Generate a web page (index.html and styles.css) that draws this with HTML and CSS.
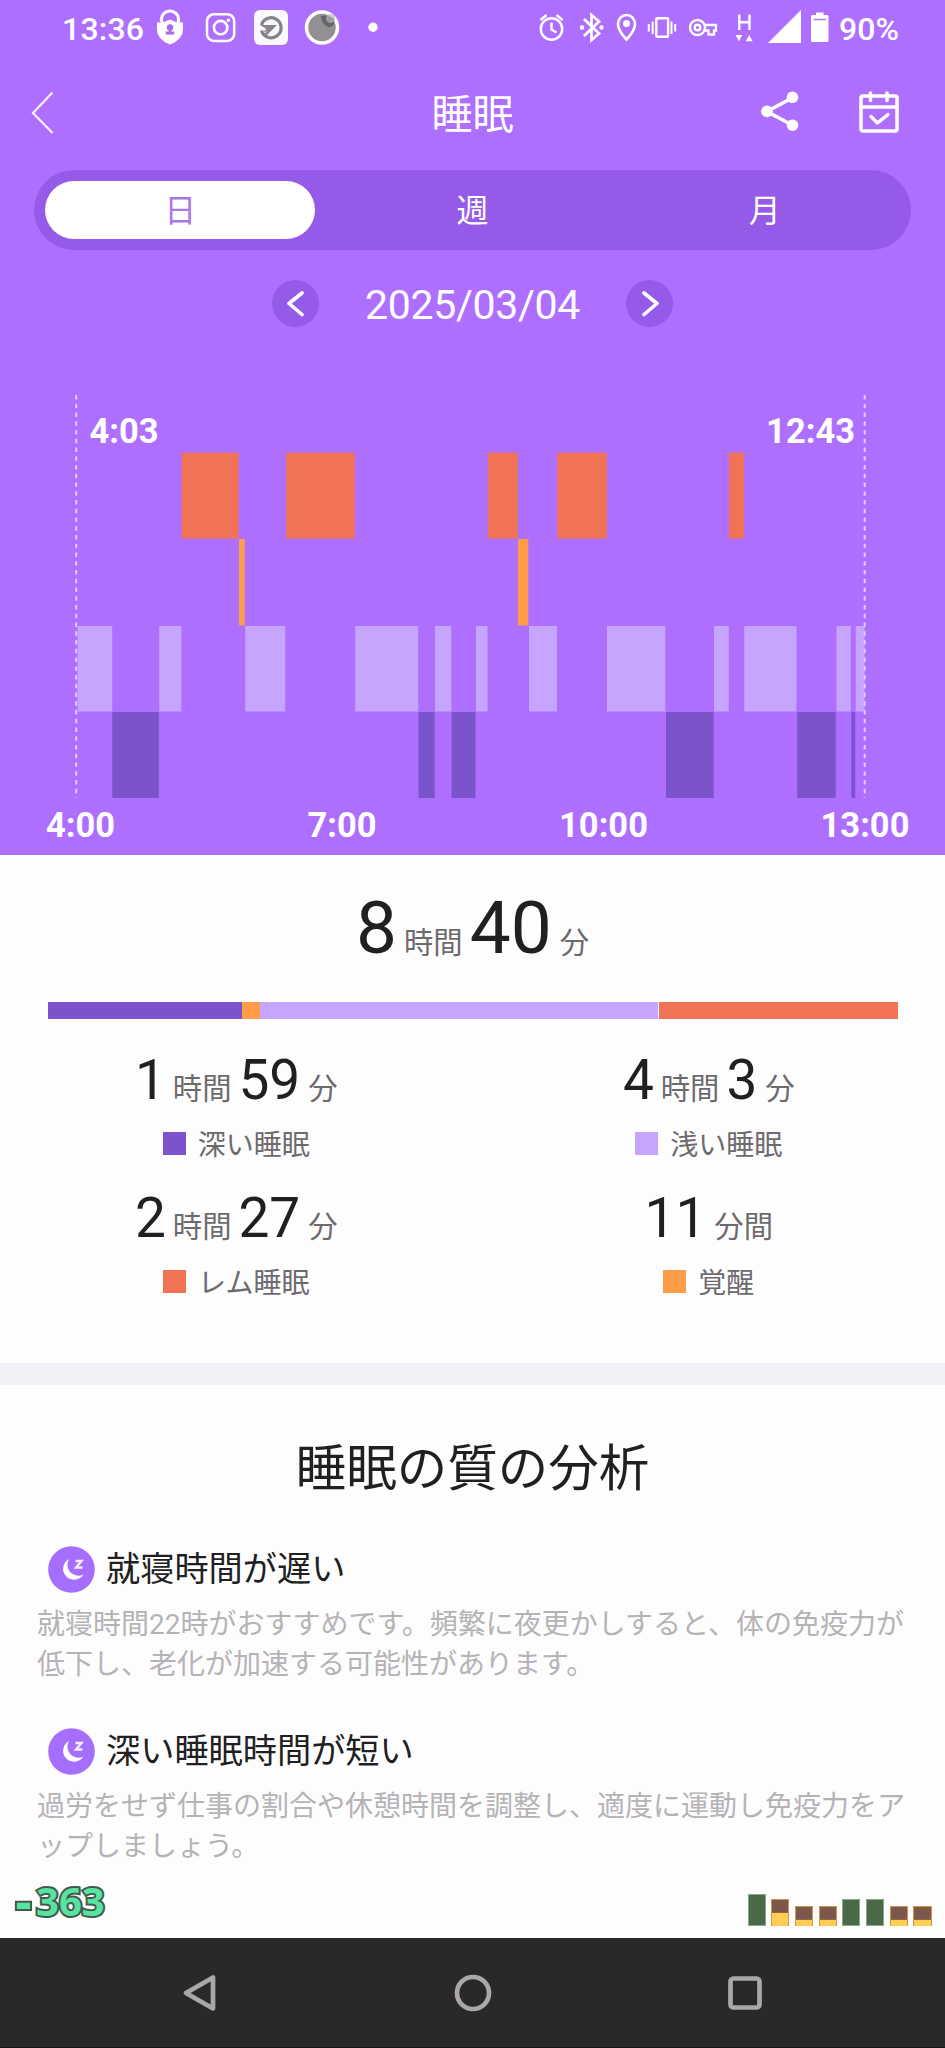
FILE: index.html
```
<!DOCTYPE html>
<html lang="ja">
<head>
<meta charset="utf-8">
<title>睡眠</title>
<link rel="stylesheet" href="styles.css">
</head>
<body>
<div class="screen">
  <section class="hero">
    <div class="status">
      <span class="status-text clock">13:36</span>
      <svg class="notifications" viewBox="150 0 240 56" width="240" height="56">
        <path d="M161.500 23v-3a8.500 8 0 0 1 17 0v3" transform="translate(0 -1)" fill="none" stroke="#fff" stroke-width="3.200"/>
        <path d="M157 22.500q7 .5 13-3q6 3.500 13 3v7q0 10-13 15q-13-5-13-15z" fill="#fff"/>
        <circle cx="170" cy="27.500" r="3.200" fill="#a76ae8"/><path d="M168.800 29h2.400v2.500h3v3h-8.400v-3h3z" fill="#a76ae8"/>
        <rect x="207" y="14.200" width="27.200" height="26.800" rx="7" fill="none" stroke="#fff" stroke-width="2.500"/>
        <circle cx="220.600" cy="27.600" r="6.700" fill="none" stroke="#fff" stroke-width="2.700"/><circle cx="228.400" cy="20.200" r="1.700" fill="#fff"/>
        <rect x="254" y="10" width="34" height="35" rx="6" fill="#fbf8fd"/>
        <path d="M261.500 25a10 10 0 1 1 0 5.500" fill="none" stroke="#858288" stroke-width="3.200"/>
        <path d="M260 25h17l-10 10h-3.500l4-4.500l-6 3.500l5-5z" fill="#858288"/>
        <circle cx="322" cy="27.500" r="15.500" fill="#929092" stroke="#fff" stroke-width="3.500"/>
        <path d="M321 16q8-1 13 3v5q-3 5-8 2q-5-4-5-10z" fill="#666467"/><circle cx="330.500" cy="18.500" r="4.500" fill="#b5b3b6" fill-opacity=".7"/>
        <circle cx="373" cy="27.300" r="4.700" fill="#fff"/>
      </svg>
      <svg class="system" viewBox="535 0 300 56" width="300" height="56" fill="none" stroke="#fff" stroke-width="2.400">
        <circle cx="551.500" cy="29" r="10.700"/><path d="M551.500 22.500v7l5 3M540.500 20l6-5M562.500 20l-6-5"/>
        <path d="M584 19l15 14.500l-7.500 6.500v-25l7.500 6.500l-15 14.500" stroke-width="2.700"/><circle cx="582" cy="27.500" r="1" /><circle cx="601.500" cy="27.500" r="1"/>
        <path d="M626.500 39.500q-8.500-9-8.500-15.500a8.500 9 0 0 1 17 0q0 6.500-8.500 15.500z" stroke-width="2.600"/><circle cx="626.500" cy="23.500" r="3.500" fill="#fff" stroke="none"/>
        <rect x="656.300" y="18.200" width="11.800" height="18.600" rx="1"/><path d="M652.700 21.500v12.500M648.800 24v7.500M671.500 21.500v12.500M675.200 24v7.500" stroke-width="2"/>
        <circle cx="697.500" cy="27.500" r="7.500"/><circle cx="697.500" cy="27.500" r="2.800"/><path d="M704 25h12v5.500h-2v4h-5.500v-4h-4.500" stroke-width="2.300"/>
        <path d="M739.300 14.500v15.500M749.500 14.500v15.500M739.300 22.200h10.200"/>
        <path d="M735.500 35h6.800l-3.400 6.300zM745.800 41.300h6.800l-3.400-6.300z" fill="#fff" stroke="none"/>
        <path d="M768 43l33-33v33z" fill="#fff" stroke="none"/>
        <path d="M811 16.500q0-1.500 1.500-1.500h3.500v-2.500h7.500v2.500h3.500q1.500 0 1.500 1.500v24q0 1.500-1.500 1.500h-14.500q-1.500 0-1.500-1.500z" fill="#fff" stroke="none"/><path d="M813.500 19.500h12.500" stroke="#b27bfa" stroke-width="1.500"/>
      </svg>
      <span class="status-text battery">90%</span>
    </div>
    <header class="header">
      <svg viewBox="0 0 24 44" width="24" height="44"><path d="M21.500 1.500L2 22l19.500 20" fill="none" stroke="#fff" stroke-opacity=".9" stroke-width="2.200"/></svg>
      <h1 class="title">睡眠</h1>
      <div class="actions">
        <svg viewBox="0 0 38 42" width="38" height="42"><path d="M32 6.500L6 20.500L32 34.500" fill="none" stroke="#fff" stroke-width="3.600"/><g fill="#fff"><circle cx="31.500" cy="6.300" r="5.800"/><circle cx="6" cy="20.300" r="5.900"/><circle cx="31.500" cy="34.200" r="5.800"/></g></svg>
        <svg viewBox="0 0 40 42" width="40" height="42" fill="none" stroke="#fff" stroke-width="3.500" stroke-linecap="round" stroke-linejoin="round"><rect x="2" y="5" width="36" height="35" rx="2"/><path d="M2 16h36M11.500 2v7.500M28 2v7.500M12 25.500l6.500 6.500l10.500-8.500"/></svg>
      </div>
    </header>
    <nav class="tabs"><span class="tab active">日</span><span class="tab">週</span><span class="tab">月</span></nav>
    <div class="date-row">
      <span class="round"><svg viewBox="0 0 20 26" width="20" height="26"><path d="M16 2L3 12.500L16 23.500" fill="none" stroke="#fff" stroke-width="3.600" stroke-linecap="round" stroke-linejoin="round"/></svg></span>
      <span class="date">2025/03/04</span>
      <span class="round"><svg viewBox="0 0 20 26" width="20" height="26"><path d="M4 2L17 12.500L4 23.500" fill="none" stroke="#fff" stroke-width="3.600" stroke-linecap="round" stroke-linejoin="round"/></svg></span>
    </div>
    <svg class="chart" viewBox="0 380 945 475" width="945" height="475">
      <g class="rem"><rect x="181.700" y="452.700" width="57" height="85.800"/><rect x="286" y="452.700" width="68.800" height="85.800"/><rect x="487.800" y="452.700" width="30" height="85.800"/><rect x="557.200" y="452.700" width="49.600" height="85.800"/><rect x="729" y="452.700" width="15" height="85.800"/></g>
      <g class="awake"><rect x="239" y="539" width="5.800" height="86.500"/><rect x="518" y="539" width="10.300" height="86.500"/></g>
      <g class="light"><rect x="77.500" y="626" width="34.700" height="85.500"/><rect x="159.300" y="626" width="22" height="85.500"/><rect x="245.200" y="626" width="40" height="85.500"/><rect x="355.200" y="626" width="63" height="85.500"/><rect x="435" y="626" width="16.300" height="85.500"/><rect x="476" y="626" width="11.500" height="85.500"/><rect x="529" y="626" width="28" height="85.500"/><rect x="607" y="626" width="58.300" height="85.500"/><rect x="714" y="626" width="14.700" height="85.500"/><rect x="744.200" y="626" width="52.300" height="85.500"/><rect x="836.500" y="626" width="14.200" height="85.500"/><rect x="855.700" y="626" width="9" height="85.500"/></g>
      <g class="deep"><rect x="112.300" y="712" width="46.500" height="86"/><rect x="418.500" y="712" width="16.200" height="86"/><rect x="451.500" y="712" width="24" height="86"/><rect x="666" y="712" width="47.700" height="86"/><rect x="797.200" y="712" width="38.500" height="86"/><rect x="851.300" y="712" width="4" height="86"/></g>
      <path d="M76.200 395v403M864.700 395v403" class="guide"/>
      <g class="labels"><text x="89.500" y="442.500">4:03</text><text x="855" y="442.500" text-anchor="end">12:43</text><g text-anchor="middle"><text x="80.500" y="836.500">4:00</text><text x="342" y="836.500">7:00</text><text x="603.500" y="836.500">10:00</text><text x="865" y="836.500">13:00</text></g></g>
    </svg>
  </section>

  <section class="summary">
    <div class="amount total"><b>8</b><i>時間</i><b>40</b><i>分</i></div>
    <div class="ratio"><span class="bg-deep"></span><span class="bg-awake"></span><span class="bg-light"></span><span class="bg-rem"></span></div>
    <div class="stats">
      <div class="stat"><div class="amount"><b>1</b><i>時間</i><b>59</b><i>分</i></div><div class="legend"><span class="swatch bg-deep"></span>深い睡眠</div></div>
      <div class="stat"><div class="amount"><b>4</b><i>時間</i><b>3</b><i>分</i></div><div class="legend"><span class="swatch bg-light"></span>浅い睡眠</div></div>
      <div class="stat"><div class="amount"><b>2</b><i>時間</i><b>27</b><i>分</i></div><div class="legend"><span class="swatch bg-rem"></span>レム睡眠</div></div>
      <div class="stat"><div class="amount"><b>11</b><i>分間</i></div><div class="legend"><span class="swatch bg-awake"></span>覚醒</div></div>
    </div>
  </section>

  <section class="analysis">
    <h2>睡眠の質の分析</h2>
    <article class="item">
      <h3><svg viewBox="0 0 47 47" width="47" height="47"><circle cx="23.500" cy="23.500" r="23.300" fill="#a56eff"/><path d="M21 13A11 11 0 1 0 35.500 28.500A11 11 0 0 1 21 13z" fill="#fff"/><path d="M27.500 15h6l-5.500 6.500h6.500" fill="none" stroke="#f5edff" stroke-width="2.400"/></svg>就寝時間が遅い</h3>
      <p>就寝時間22時がおすすめです。頻繁に夜更かしすると、体の免疫力が<br>低下し、老化が加速する可能性があります。</p>
    </article>
    <article class="item">
      <h3><svg viewBox="0 0 47 47" width="47" height="47"><circle cx="23.500" cy="23.500" r="23.300" fill="#a56eff"/><path d="M21 13A11 11 0 1 0 35.500 28.500A11 11 0 0 1 21 13z" fill="#fff"/><path d="M27.500 15h6l-5.500 6.500h6.500" fill="none" stroke="#f5edff" stroke-width="2.400"/></svg>深い睡眠時間が短い</h3>
      <p>過労をせず仕事の割合や休憩時間を調整し、適度に運動し免疫力をア<br>ップしましょう。</p>
    </article>
    <div class="overlay">
      <svg class="score" viewBox="0 0 120 64" width="120" height="64"><text y="44"><tspan class="sign" x="15.500" dy="2.500">-</tspan><tspan x="36" dy="-2.500">363</tspan></text></svg>
      <div class="mini">
        <span class="green h1"></span><span class="split h2"></span><span class="split h3"></span><span class="split h3"></span><span class="green h2"></span><span class="green h2"></span><span class="split h3"></span><span class="split h3"></span>
      </div>
    </div>
  </section>

  <footer class="navbar">
    <svg viewBox="0 0 36 38" width="36" height="38"><path d="M31 3.500v31L4 19z"/></svg>
    <svg viewBox="0 0 38 38" width="38" height="38"><circle cx="19" cy="19" r="16"/></svg>
    <svg viewBox="0 0 36 36" width="36" height="36"><rect x="3.500" y="3.500" width="29" height="29" rx="3"/></svg>
  </footer>
</div>
</body>
</html>
```
FILE: styles.css
```
* { box-sizing: border-box; }
body { margin: 0; background: #fefdfe; font-family: Roboto, "Noto Sans CJK JP", sans-serif; color: #211f22; }
.screen { width: 945px; height: 2048px; overflow: hidden; display: flex; flex-direction: column; }
svg { display: block; flex: none; }
h1, h2, h3, p { margin: 0; font-weight: 400; }

.hero { background: #ae6fff; height: 855px; color: #fff; }
.status { height: 56px; display: flex; align-items: center; padding-left: 62px; }
.status-text { font-size: 32px; font-weight: 500; line-height: 38px; padding-top: 2px; }
.clock { width: 88px; letter-spacing: 0.2px; }
.system { margin-left: 145px; }
.battery { margin-left: 4px; }

.header { height: 114px; padding: 0 46px 0 31px; display: grid; grid-template-columns: 149px 1fr 138px; align-items: center; }
.title { font-size: 41px; line-height: 50px; text-align: center; padding: 4px 0 0 4px; }
.actions { display: flex; justify-content: space-between; align-items: center; padding-bottom: 3px; }

.tabs { width: 877px; height: 80px; margin: 0 34px; border-radius: 40px; background: #955ae8; display: grid; grid-template-columns: repeat(3, 1fr); padding: 11px 0; }
.tab { display: flex; align-items: center; justify-content: center; font-size: 32px; line-height: 40px; padding-top: 2px; }
.active { background: #fff; color: #aa78e4; border-radius: 29px; margin: 0 11px; }

.date-row { height: 107px; display: flex; align-items: center; justify-content: center; }
.date { width: 307px; text-align: center; font-size: 41px; letter-spacing: -0.3px; line-height: 48px; padding-top: 3px; }
.round { width: 47px; height: 47px; border-radius: 50%; background: #955ae8; display: flex; align-items: center; justify-content: center; }
.chart { margin-top: 23px; }
.rem { fill: #f07355; }
.awake { fill: #ff9c48; }
.light { fill: #c6a5ff; }
.deep { fill: #7b54cb; }
.guide { stroke: #e2ccff; stroke-width: 2; stroke-dasharray: 4.400 4.350; fill: none; }
.labels { fill: #fff; font-size: 34.500px; font-weight: 700; }

.summary { height: 508px; padding-top: 30px; }
.amount { display: flex; justify-content: center; align-items: baseline; }
.amount b { font-weight: 400; font-size: 55px; line-height: 64px; }
.amount i { font-style: normal; font-size: 29.300px; line-height: 40px; color: #6d6a6e; margin: 0 7px; }
.amount i:last-child { margin: 0 0 0 8px; }
.total { height: 86px; }
.total b { font-size: 73px; line-height: 86px; }
.ratio { height: 17px; margin: 31px 47px 0 48px; display: grid; grid-template-columns: 193.500px 17.500px 1fr 239.500px; gap: 0.500px; }
.bg-deep { background: #7b54cb; }
.bg-awake { background: #ff9c48; }
.bg-light { background: #c6a5ff; }
.bg-rem { background: #f07355; }
.stats { display: grid; grid-template-columns: 1fr 1fr; margin-top: 28.500px; }
.stat { height: 138.300px; }
.stat .amount { height: 78px; }
.legend { display: flex; justify-content: center; align-items: center; gap: 12px; font-size: 28px; line-height: 40px; color: #6d6a6e; }
.swatch { width: 23px; height: 23px; margin-bottom: 5px; }

.analysis { height: 575px; border-top: 22px solid #f1f0f6; position: relative; }
.analysis h2 { font-size: 50.500px; line-height: 60px; text-align: center; padding-top: 54px; height: 161px; }
.item { height: 182px; padding: 0 37px; }
.item h3 { display: flex; align-items: center; gap: 11px; font-size: 34.200px; line-height: 47px; padding-left: 11px; }
.item p { font-size: 28px; line-height: 40.700px; color: #b5b3b6; white-space: nowrap; padding-top: 11.500px; }
.overlay { position: absolute; left: 0; right: 0; bottom: 2px; display: flex; justify-content: space-between; align-items: flex-end; padding-right: 13.500px; }
.score text { font-family: "Noto Sans", sans-serif; font-weight: 700; font-size: 40px; fill: #57e3a0; stroke: #42594f; stroke-width: 4px; paint-order: stroke; }
.score .sign { font-size: 50px; }
.mini { display: flex; gap: 5.500px; align-items: flex-end; margin-bottom: 10px; }
.mini span { width: 18.200px; }
.green { background: #4a6948; border: 1px solid #87aa89; }
.split { background: #ffcf55; border: 1px solid #d1944b; border-bottom: 0; }
.split::before { content: ""; display: block; height: 12px; background: #7b574c; border-bottom: 1px solid #94653f; }
.h1 { height: 32px; }
.h2 { height: 27px; }
.h3 { height: 20px; }

.navbar { height: 110px; background: #2b282b; border-bottom: 1px solid #171517; display: flex; justify-content: space-between; align-items: center; padding: 0 182px; }
.navbar svg { fill: none; stroke: #aaa7ab; stroke-width: 4.700; stroke-linejoin: round; }
```
